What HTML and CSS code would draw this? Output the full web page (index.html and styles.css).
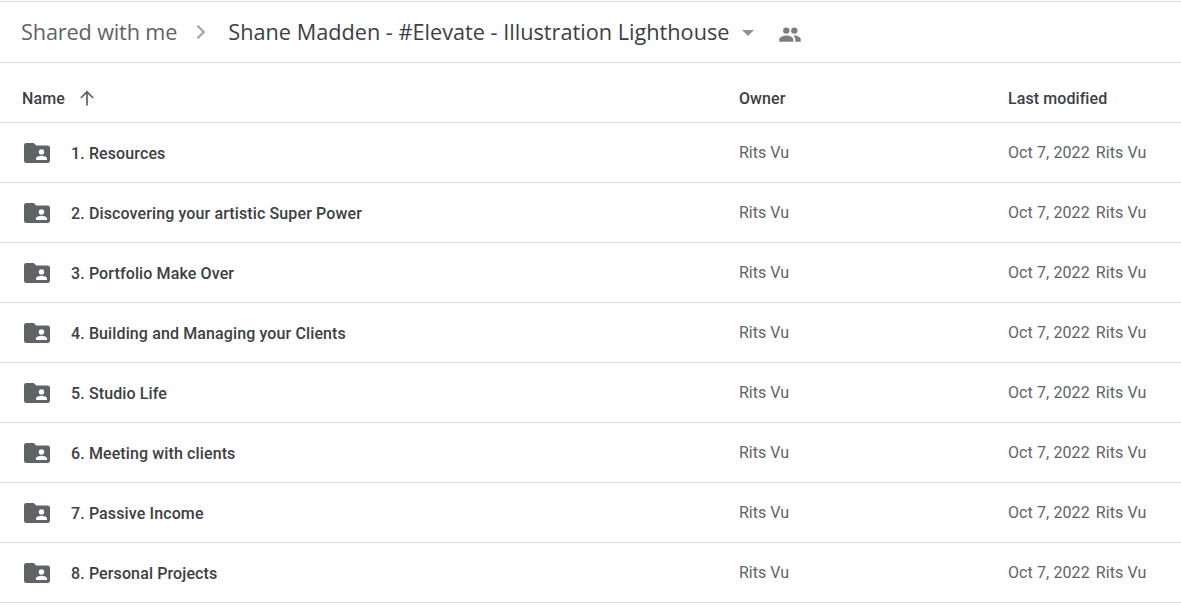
FILE: index.html
```html
<!DOCTYPE html>
<html lang="en">
<head>
    <meta charset="UTF-8">
    <title>Shared with me - Drive</title>
    <link rel="stylesheet" href="styles.css">
</head>
<body>
    <svg class="sprites" width="0" height="0">
        <symbol id="shared-folder" viewBox="0 0 26 20">
            <path fill-rule="evenodd" d="M2.200 0h7.500l2.500 2.600h11.600c1.200 0 2.200 1 2.200 2.200v13c0 1.200-1 2.200-2.200 2.200H2.200A2.200 2.200 0 0 1 0 17.800V2.200A2.200 2.200 0 0 1 2.200 0zM17.500 6.200a2.700 2.700 0 1 0 0 5.400 2.700 2.700 0 0 0 0-5.400zM12 17h11v-1.500c0-1.900-3.600-2.800-5.500-2.800s-5.500.9-5.500 2.800z"/>
        </symbol>
    </svg>

    <div class="breadcrumb">
        <span class="crumb">Shared with me</span>
        <svg class="chevron" width="12" height="16" viewBox="0 0 12 16"><path d="M2.500 1.800 8.800 8l-6.300 6.200" fill="none" stroke="#9aa0a6" stroke-width="2"/></svg>
        <span class="crumb current">Shane Madden - #Elevate - Illustration Lighthouse</span>
        <span class="caret"></span>
        <svg class="people" width="22" height="15" viewBox="0 0 22 15"><path fill="#7a7d82" d="M7.300 6.800a3.200 3.200 0 1 0 0-6.400 3.200 3.200 0 0 0 0 6.400zm8 0a3.200 3.200 0 1 0 0-6.400 3.200 3.200 0 0 0 0 6.400zM7.300 8.400C4.800 8.400.3 9.700.3 12.200v2.500h14v-2.500c0-2.500-4.500-3.800-7-3.800zm8 0c-.4 0-.8 0-1.200.1 1.400 1 2.200 2.200 2.200 3.700v2.500h5.400v-2.500c0-2.500-3.900-3.800-6.400-3.800z"/></svg>
    </div>

    <div class="row head">
        <div class="name-col">
            <span>Name</span>
            <svg class="sort" width="16" height="16" viewBox="0 0 16 16"><path d="M8 15.500V1.800M1.800 8 8 1.800 14.200 8" fill="none" stroke="#5f6368" stroke-width="1.700"/></svg>
        </div>
        <div>Owner</div>
        <div>Last modified</div>
    </div>

    <div class="row">
        <div class="name-col"><svg class="folder"><use href="#shared-folder"/></svg><span class="file">1. Resources</span></div>
        <div class="owner">Rits Vu</div>
        <div class="modified"><span>Oct 7, 2022</span><span class="owner">Rits Vu</span></div>
    </div>
    <div class="row">
        <div class="name-col"><svg class="folder"><use href="#shared-folder"/></svg><span class="file">2. Discovering your artistic Super Power</span></div>
        <div class="owner">Rits Vu</div>
        <div class="modified"><span>Oct 7, 2022</span><span class="owner">Rits Vu</span></div>
    </div>
    <div class="row">
        <div class="name-col"><svg class="folder"><use href="#shared-folder"/></svg><span class="file">3. Portfolio Make Over</span></div>
        <div class="owner">Rits Vu</div>
        <div class="modified"><span>Oct 7, 2022</span><span class="owner">Rits Vu</span></div>
    </div>
    <div class="row">
        <div class="name-col"><svg class="folder"><use href="#shared-folder"/></svg><span class="file">4. Building and Managing your Clients</span></div>
        <div class="owner">Rits Vu</div>
        <div class="modified"><span>Oct 7, 2022</span><span class="owner">Rits Vu</span></div>
    </div>
    <div class="row">
        <div class="name-col"><svg class="folder"><use href="#shared-folder"/></svg><span class="file">5. Studio Life</span></div>
        <div class="owner">Rits Vu</div>
        <div class="modified"><span>Oct 7, 2022</span><span class="owner">Rits Vu</span></div>
    </div>
    <div class="row">
        <div class="name-col"><svg class="folder"><use href="#shared-folder"/></svg><span class="file">6. Meeting with clients</span></div>
        <div class="owner">Rits Vu</div>
        <div class="modified"><span>Oct 7, 2022</span><span class="owner">Rits Vu</span></div>
    </div>
    <div class="row">
        <div class="name-col"><svg class="folder"><use href="#shared-folder"/></svg><span class="file">7. Passive Income</span></div>
        <div class="owner">Rits Vu</div>
        <div class="modified"><span>Oct 7, 2022</span><span class="owner">Rits Vu</span></div>
    </div>
    <div class="row">
        <div class="name-col"><svg class="folder"><use href="#shared-folder"/></svg><span class="file">8. Personal Projects</span></div>
        <div class="owner">Rits Vu</div>
        <div class="modified"><span>Oct 7, 2022</span><span class="owner">Rits Vu</span></div>
    </div>
</body>
</html>
```

FILE: styles.css
```css
body {
    margin: 0;
    height: 607px;
    overflow: hidden;
    background-color: #ffffff;
    color: #3c4043;
    font-family: Roboto, "Liberation Sans", sans-serif;
    font-size: 16px;
}

.sprites {
    display: block;
}

.breadcrumb {
    display: flex;
    align-items: center;
    height: 60px;
    margin-top: 1px;
    padding-left: 21px;
    border-top: 1px solid #dadce0;
    border-bottom: 1px solid #dadce0;
}

.crumb {
    margin-bottom: 2px;
    font-family: "Open Sans", Roboto, sans-serif;
    font-size: 21.700px;
    letter-spacing: -0.15px;
    color: #5f6368;
}

.crumb.current {
    letter-spacing: 0;
    color: #3c4043;
}

.chevron {
    margin: 0 21px 0 18px;
}

.caret {
    width: 0;
    height: 0;
    margin: 2px 0 0 13px;
    border-left: 6px solid transparent;
    border-right: 6px solid transparent;
    border-top: 6px solid #8e9196;
}

.people {
    margin: 4px 0 0 25px;
}

.row {
    display: grid;
    grid-template-columns: 739px 269px 1fr;
    align-items: center;
    height: 59px;
    border-bottom: 1px solid #dadce0;
}

.row.head {
    box-sizing: border-box;
    height: 60px;
    padding-top: 11px;
    font-weight: 500;
    letter-spacing: 0.08px;
}

.name-col {
    display: flex;
    align-items: center;
    padding-left: 22px;
}

.sort {
    margin-left: 14px;
}

.folder {
    width: 26px;
    height: 20px;
    margin: 1px 21px 0 2px;
    fill: #5f6368;
}

.file {
    margin-top: 1px;
    font-weight: 500;
    letter-spacing: 0.12px;
}

.owner {
    color: #5f6368;
}

.modified {
    display: flex;
    gap: 6px;
    letter-spacing: 0.1px;
    color: #5f6368;
}
```
